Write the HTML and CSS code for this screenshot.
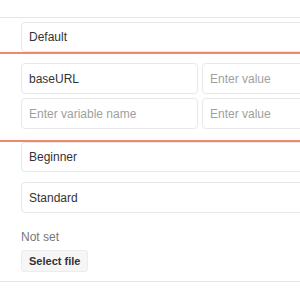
FILE: index.html
```html
<!DOCTYPE html>
<html>
<head>
<meta charset="utf-8">
<link rel="stylesheet" href="styles.css">
</head>
<body>
<div class="page">
  <div class="section first">
    <input class="field" type="text" value="Default">
  </div>
  <div class="accent"></div>
  <div class="section vars">
    <div class="pair">
      <input class="field" type="text" value="baseURL">
      <input class="field" type="text" placeholder="Enter value">
    </div>
    <div class="pair">
      <input class="field" type="text" placeholder="Enter variable name">
      <input class="field" type="text" placeholder="Enter value">
    </div>
  </div>
  <div class="accent"></div>
  <div class="section levels">
    <input class="field short" type="text" value="Beginner">
    <input class="field" type="text" value="Standard">
  </div>
  <div class="section file">
    <div class="status">Not set</div>
    <button class="btn" type="button">Select file</button>
  </div>
  <div class="rule"></div>
</div>
</body>
</html>
```
FILE: styles.css
```css
html, body {
  margin: 0;
  padding: 0;
  background: #ffffff;
  overflow: hidden;
}
body {
  font-family: "Liberation Sans", Arial, sans-serif;
  font-size: 12px;
  color: #333333;
}
.page {
  width: 420px;
  padding-top: 17px;
}
.section {
  padding-left: 21px;
  display: flex;
  flex-direction: column;
}
.first {
  border-top: 1px solid #e6e6e6;
  padding-top: 4px;
}
.field {
  box-sizing: border-box;
  height: 31px;
  margin: 0;
  padding: 0 7px;
  border: 1px solid #e8e8e8;
  border-radius: 4px;
  font-family: inherit;
  font-size: 12px;
  color: #333333;
  background: #ffffff;
  outline: none;
}
.field::placeholder {
  color: #a0a0a0;
}
.first .field {
  height: 30px;
}
.accent {
  height: 2px;
  background: #ee8a6c;
}
.vars {
  padding-top: 9px;
  padding-bottom: 11px;
  gap: 4px;
}
.pair {
  display: grid;
  grid-template-columns: 177px 177px;
  gap: 4px;
}
.levels {
  gap: 10px;
}
.levels .short {
  height: 30px;
}
.file {
  padding-top: 17px;
  align-items: flex-start;
}
.status {
  color: #777777;
  line-height: 14px;
}
.btn {
  margin-top: 6px;
  box-sizing: border-box;
  height: 22px;
  padding: 0 7px;
  border: 1px solid #ececec;
  border-radius: 3px;
  background: #f6f6f6;
  font-family: inherit;
  font-size: 11px;
  font-weight: bold;
  color: #333333;
}
.rule {
  margin-top: 9px;
  border-top: 1px solid #e6e6e6;
}
```
